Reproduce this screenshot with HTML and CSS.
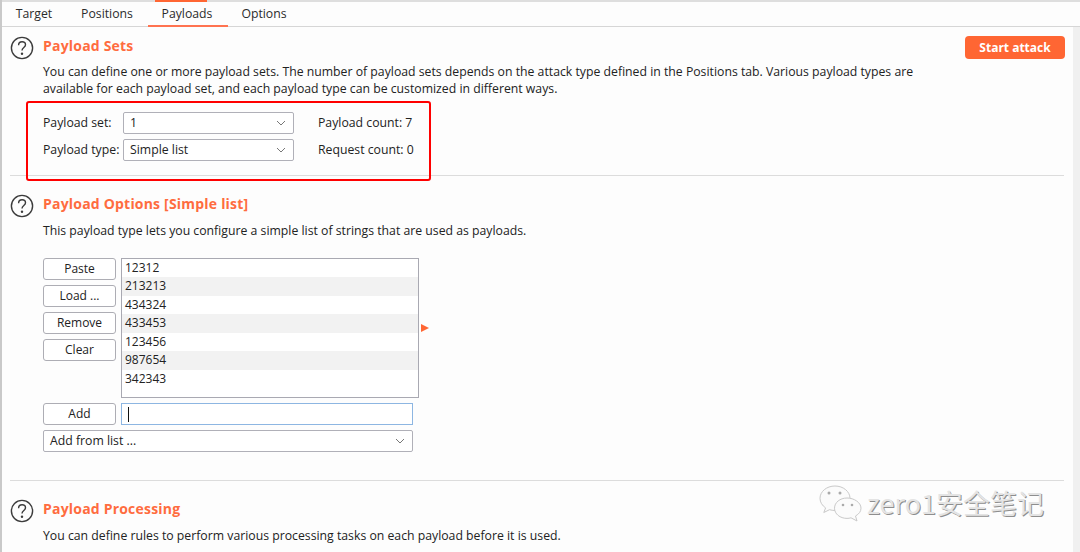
FILE: index.html
```html
<!DOCTYPE html>
<html lang="en">
<head>
<meta charset="utf-8">
<title>Payloads</title>
<link rel="stylesheet" href="styles.css">
</head>
<body>
<div class="topstrip"><span class="topmark"></span></div>
<nav class="tabs">
  <span class="tab">Target</span>
  <span class="tab">Positions</span>
  <span class="tab active">Payloads</span>
  <span class="tab">Options</span>
</nav>
<main class="panel">
  <div class="content">
    <section class="section sets">
      <svg class="help" viewBox="0 0 24 24"><circle cx="12" cy="12" r="10.6"/><path d="M8.6 9.2c0-2.2 1.500-3.400 3.500-3.400s3.400 1.200 3.400 3c0 2.700-3.500 2.700-3.500 5.700"/><circle class="dot" cx="12" cy="17.800" r="1.200"/></svg>
      <div class="body">
        <div class="headrow">
          <h2>Payload Sets</h2>
          <button class="attack">Start attack</button>
        </div>
        <p class="desc">You can define one or more payload sets. The number of payload sets depends on the attack type defined in the Positions tab. Various payload types are<br>available for each payload set, and each payload type can be customized in different ways.</p>
        <div class="formgrid">
          <label>Payload set:</label>
          <div class="select"><span>1</span><svg class="chev" viewBox="0 0 10 6"><path d="M1 1l4 4 4-4"/></svg></div>
          <span class="count">Payload count: 7</span>
          <label>Payload type:</label>
          <div class="select"><span>Simple list</span><svg class="chev" viewBox="0 0 10 6"><path d="M1 1l4 4 4-4"/></svg></div>
          <span class="count">Request count: 0</span>
        </div>
      </div>
    </section>
    <section class="section options">
      <svg class="help" viewBox="0 0 24 24"><circle cx="12" cy="12" r="10.6"/><path d="M8.6 9.2c0-2.2 1.500-3.400 3.500-3.400s3.400 1.200 3.400 3c0 2.700-3.500 2.700-3.500 5.700"/><circle class="dot" cx="12" cy="17.800" r="1.200"/></svg>
      <div class="body">
        <h2>Payload Options [Simple list]</h2>
        <p class="desc one">This payload type lets you configure a simple list of strings that are used as payloads.</p>
        <div class="listrow">
          <div class="buttons">
            <button class="btn">Paste</button>
            <button class="btn">Load ...</button>
            <button class="btn">Remove</button>
            <button class="btn">Clear</button>
          </div>
          <ul class="list">
            <li>12312</li><li>213213</li><li>434324</li><li>433453</li><li>123456</li><li>987654</li><li>342343</li>
          </ul>
          <span class="arrow"></span>
        </div>
        <div class="addrow">
          <button class="btn">Add</button>
          <div class="input"><span class="caret"></span></div>
        </div>
        <div class="select w370"><span>Add from list ...</span><svg class="chev" viewBox="0 0 10 6"><path d="M1 1l4 4 4-4"/></svg></div>
      </div>
    </section>
    <section class="section processing">
      <svg class="help" viewBox="0 0 24 24"><circle cx="12" cy="12" r="10.6"/><path d="M8.6 9.2c0-2.2 1.500-3.400 3.500-3.400s3.400 1.200 3.400 3c0 2.700-3.500 2.700-3.500 5.700"/><circle class="dot" cx="12" cy="17.800" r="1.200"/></svg>
      <div class="body">
        <h2>Payload Processing</h2>
        <p class="desc one">You can define rules to perform various processing tasks on each payload before it is used.</p>
      </div>
    </section>
  </div>
  <div class="gutter"></div>
</main>
<div class="redbox"></div>
<div class="watermark">
  <svg class="wechat" viewBox="0 0 44 38"><path d="M17 2C8.700 2 2 7.500 2 14.300c0 3.900 2.200 7.300 5.600 9.600L5.800 28.500l5.700-2.800c1.800.5 3.500.8 5.500.8 8.300 0 15-5.500 15-12.200S25.300 2 17 2z"/><path class="front" d="M29 14c-7 0-12.500 4.500-12.500 10.200S22 34.400 29 34.400c1.400 0 2.800-.2 4-.6l6 3.200-1.500-5c3.500-2 5.500-4.500 5.500-7.800C43 18.500 36 14 29 14z"/><circle cx="11" cy="9" r="1.500"/><circle cx="22" cy="9" r="1.500"/><circle cx="25" cy="21" r="1.300"/><circle cx="34" cy="21" r="1.300"/></svg>
  <span>zero1安全笔记</span>
</div>
</body>
</html>
```
FILE: styles.css
```css
* { box-sizing: border-box; }
html, body { margin: 0; height: 552px; overflow: hidden; }
body {
  position: relative;
  width: 1080px;
  background: #fdfdfd;
  color: #222;
  font: 12.25px/18px "Open Sans", "Noto Sans", sans-serif;
  border-left: 2px solid #c9c9c9;
}
.topstrip { height: 2px; background: #dedede; position: relative; }
.topmark { display: block; width: 52px; height: 2px; margin-left: 153px; background: #ff6633; }
.tabs {
  display: flex;
  height: 25px;
  background: #fdfdfd;
  border-bottom: 1px solid #d6d6d6;
}
.tab { padding-top: 3px; text-align: center; line-height: 18px; color: #2b2b2b; }
.tab:nth-child(1) { width: 64px; }
.tab:nth-child(2) { width: 82px; }
.tab:nth-child(3) { width: 80px; padding-right: 2px; border-bottom: 2px solid #ff7350; height: 25px; }
.tab:nth-child(4) { width: 72px; }
.panel { display: flex; height: 525px; }
.content { width: 1071px; padding-left: 8px; }
.gutter { width: 7px; background: #f0f0f0; }
.section { display: flex; width: 1054px; border-bottom: 1px solid #dcdcdc; }
.section:last-child { border-bottom: 0; }
.sets { height: 149px; padding-top: 8px; }
.options { height: 305px; padding-top: 17px; }
.processing { padding-top: 17px; }
.help { width: 24px; height: 24px; flex: none; margin-top: 1px; fill: none; stroke: #3c3c3c; stroke-width: 1.400; }
.help .dot { fill: #3c3c3c; stroke: none; }
.body { margin-left: 9px; flex: 1; }
.headrow { display: flex; justify-content: space-between; height: 22px; }
h2 { margin: 0; font-size: 14px; line-height: 22px; font-weight: 700; color: #ff6c3f; letter-spacing: 0.2px; }
.attack {
  width: 100px; height: 23px; margin-top: 1px; margin-right: -1px;
  border: 0; border-radius: 4px; background: #ff6633; color: #fff;
  font: 700 12px/23px "Open Sans", sans-serif; padding: 0;
}
.desc { margin: 7px 0 0; line-height: 16.5px; }
.desc.one { margin-top: 8px; }
.formgrid {
  display: grid;
  grid-template-columns: 80px 171px auto;
  grid-auto-rows: 22px;
  row-gap: 5px;
  align-items: center;
  margin-top: 15px;
}
.count { margin-left: 24px; }
label { white-space: nowrap; }
.select {
  display: flex; align-items: center; justify-content: space-between;
  height: 22px; padding: 0 7px 0 6px;
  background: #fff; border: 1px solid #b0b0b8; border-radius: 2px;
}
.w370 { width: 370px; }
.chev { width: 10px; height: 6px; fill: none; stroke: #777; stroke-width: 1; }
.listrow { display: flex; margin-top: 18px; position: relative; align-items: flex-start; }
.buttons { display: flex; flex-direction: column; gap: 5px; width: 73px; }
.btn {
  width: 73px; height: 22px; padding: 0;
  background: #fff; border: 1px solid #adadb4; border-radius: 3px;
  font: 12px/20px "Open Sans", sans-serif; color: #222;
}
.list {
  list-style: none; margin: 0 0 0 5px; padding: 0;
  width: 298px; height: 140px;
  font-size: 12px;
  background: #fff; border: 1px solid #a9a9b2;
}
.list li { height: 18.6px; line-height: 18.6px; padding-left: 3px; }
.list li:nth-child(even) { background: #f2f2f2; }
.arrow {
  width: 0; height: 0; margin: 66px 0 0 2px;
  border-left: 8px solid #ff6633; border-top: 4px solid transparent; border-bottom: 4px solid transparent;
}
.addrow { display: flex; gap: 5px; margin-top: 5px; margin-bottom: 5px; }
.input {
  width: 292px; height: 22px; padding: 3px 6px;
  background: #fff; border: 1px solid #8db6e2;
}
.caret { display: block; width: 1px; height: 15px; background: #111; }
.redbox {
  position: absolute; left: 24px; top: 101px; width: 405px; height: 80px;
  border: 2.500px solid #f00; border-radius: 3px;
}
.watermark {
  position: absolute; left: 816px; top: 484px;
  display: flex; align-items: center; gap: 5px;
  color: #e4e4e4; font: 27px/34px "Noto Sans CJK SC", "Noto Sans", sans-serif;
  text-shadow: 1px 1px 0 #8e8e8e;
}
.wechat { width: 44px; height: 38px; fill: #fbfbfb; stroke: #c9c9c9; stroke-width: 1; }
.wechat circle { fill: #aaa; stroke: none; }
```
